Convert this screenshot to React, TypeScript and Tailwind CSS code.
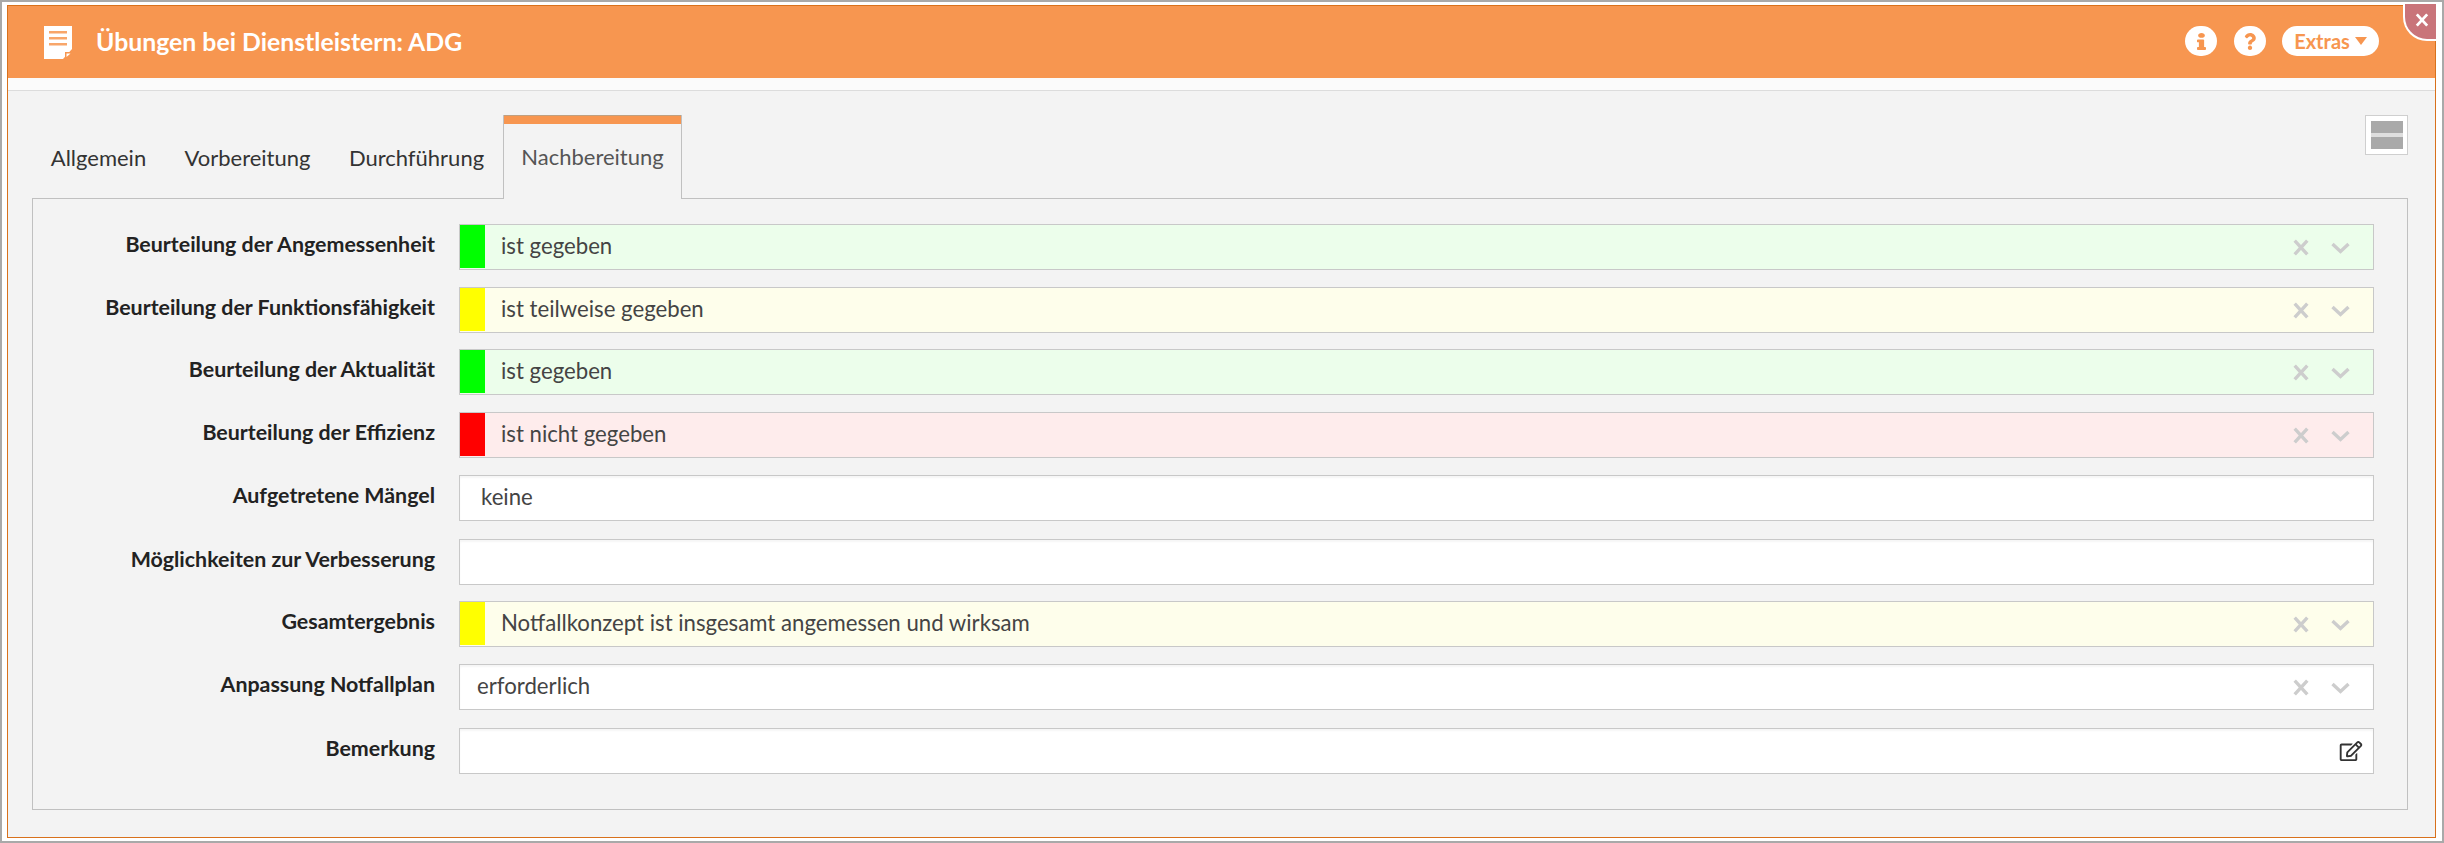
import { FaInfo, FaQuestion, FaRegEdit } from 'react-icons/fa';

type Row = {
  label: string;
  value?: string;
  color?: 'green' | 'yellow' | 'red';
  kind: 'select' | 'input' | 'text';
  rowClass: string;
  textClass?: string;
};

const rows: Row[] = [
  { label: 'Beurteilung der Angemessenheit', value: 'ist gegeben', color: 'green', kind: 'select', rowClass: 'mb-[17px]' },
  { label: 'Beurteilung der Funktionsfähigkeit', value: 'ist teilweise gegeben', color: 'yellow', kind: 'select', rowClass: 'mb-[16px]' },
  { label: 'Beurteilung der Aktualität', value: 'ist gegeben', color: 'green', kind: 'select', rowClass: 'mb-[17px]' },
  { label: 'Beurteilung der Effizienz', value: 'ist nicht gegeben', color: 'red', kind: 'select', rowClass: 'mb-[17px]' },
  { label: 'Aufgetretene Mängel', value: 'keine', kind: 'input', rowClass: 'mb-[18px]', textClass: 'pl-[21px]' },
  { label: 'Möglichkeiten zur Verbesserung', kind: 'input', rowClass: 'mb-[16px]' },
  { label: 'Gesamtergebnis', value: 'Notfallkonzept ist insgesamt angemessen und wirksam', color: 'yellow', kind: 'select', rowClass: 'mb-[17px]' },
  { label: 'Anpassung Notfallplan', value: 'erforderlich', kind: 'select', rowClass: 'mb-[18px]', textClass: 'pl-[17px]' },
  { label: 'Bemerkung', kind: 'text', rowClass: '' },
];

const fieldBg = {
  green: 'bg-[#ecfeeb]',
  yellow: 'bg-[#fefeeb]',
  red: 'bg-[#feecec]',
};

const blockBg = {
  green: 'bg-[#00ff00]',
  yellow: 'bg-[#ffff00]',
  red: 'bg-[#ff0000]',
};

const tabs = [
  { name: 'Allgemein', width: 'w-[133px]' },
  { name: 'Vorbereitung', width: 'w-[165px]' },
  { name: 'Durchführung', width: 'w-[173px]' },
];

function NoteIcon() {
  return (
    <svg viewBox="0 0 28 33" className="w-[28px] h-[33px]">
      <path d="M0 0H28V23L19 33H0Z" fill="#fff" />
      <path d="M5 5H23V7.5H5ZM5 11H23V13.5H5ZM5 17H23V19.5H5Z" fill="#f79650" opacity="0.85" />
      <path d="M21 33L21 26H28Z" fill="#f79650" />
      <path d="M22.5 31L22.5 27.5H26.5Z" fill="#fff" />
    </svg>
  );
}

function ClearIcon({ className }: { className: string }) {
  return (
    <svg viewBox="0 0 16 17" className={className}>
      <path d="M1.7 1.7L14.3 15.3M14.3 1.7L1.7 15.3" stroke="currentColor" strokeWidth="3.4" fill="none" />
    </svg>
  );
}

function ChevronIcon() {
  return (
    <svg viewBox="0 0 19 12" className="w-[19px] h-[12px] mt-[2px]">
      <path d="M1.5 2L9.5 9.5L17.5 2" stroke="currentColor" strokeWidth="3.4" fill="none" />
    </svg>
  );
}

function Field({ row }: { row: Row }) {
  const bg = row.color ? fieldBg[row.color] : 'bg-white shadow-[inset_0_2px_2px_rgba(0,0,0,0.04)]';
  return (
    <div className={`flex items-center gap-[24px] ${row.rowClass}`}>
      <label className="w-[399px] shrink-0 text-right font-bold text-[21.4px] leading-none text-[#222] -mt-[5px]">
        {row.label}
      </label>
      <div className={`flex-1 h-[46px] border border-[#c8c8c8] flex items-stretch ${bg}`}>
        {row.color && <div className={`w-[25px] mb-px shrink-0 ${blockBg[row.color]}`} />}
        <div className={`flex-1 flex items-center pb-[2px] text-[22.2px] text-[#444] ${row.color ? 'pl-[16px]' : row.textClass ?? ''}`}>
          {row.value}
        </div>
        {row.kind === 'select' && (
          <div className="flex items-center text-[#cdcdcd] pr-[23px]">
            <ClearIcon className="w-[16px] h-[17px] mr-[22px]" />
            <ChevronIcon />
          </div>
        )}
        {row.kind === 'text' && (
          <div className="flex items-center pr-[10px] text-[#333]">
            <FaRegEdit className="w-[24px] h-[20px]" />
          </div>
        )}
      </div>
    </div>
  );
}

export default function App() {
  return (
    <div className="w-[2444px] h-[843px] border-2 border-[#a9a9a9] bg-white pt-[3px] pl-[5px] pr-[6px] pb-[3px] font-['Lato','Noto_Sans',sans-serif]">
      <div className="relative h-full border border-[#d8711c] flex flex-col">
        <header className="h-[72px] shrink-0 bg-[#f79650] flex items-center pl-[36px] pr-[56px]">
          <NoteIcon />
          <h1 className="ml-[24px] text-[24.8px] font-bold text-white -mt-[1px]">Übungen bei Dienstleistern: ADG</h1>
          <div className="ml-auto flex items-center text-[#f79650] -mt-[2px]">
            <button className="w-[32px] h-[30px] rounded-full bg-white flex items-center justify-center">
              <FaInfo className="w-[9px] h-[17px]" preserveAspectRatio="none" />
            </button>
            <button className="ml-[17px] w-[32px] h-[30px] rounded-full bg-white flex items-center justify-center">
              <FaQuestion className="w-[12px] h-[17px]" preserveAspectRatio="none" />
            </button>
            <button className="ml-[16px] w-[97px] h-[30px] rounded-full bg-white flex items-center justify-center font-bold text-[20px]">
              Extras
              <svg viewBox="0 0 12 8" className="ml-[5px] w-[12px] h-[8px]">
                <path d="M0 0H12L6 8Z" fill="currentColor" />
              </svg>
            </button>
          </div>
        </header>

        <div className="h-[13px] shrink-0 bg-[#fbfbfb] border-b border-[#dcdcdc]" />

        <main className="flex-1 bg-[#f3f3f3] pt-[24px] pl-[24px] pr-[27px]">
          <div className="flex justify-between">
            <div className="flex h-[84px] relative z-10">
              {tabs.map((tab) => (
                <div key={tab.name} className={`${tab.width} flex items-center justify-center pt-[1px] text-[22px] text-[#333]`}>
                  {tab.name}
                </div>
              ))}
              <div className="w-[179px] border-x border-[#c0c0c0] bg-[#f3f3f3] flex flex-col">
                <div className="h-[9px] bg-[#f79650] border-t border-[#c0a080]" />
                <div className="flex-1 flex items-center justify-center pb-[11px] text-[22px] text-[#555]">Nachbereitung</div>
              </div>
            </div>
            <div className="w-[43px] h-[40px] border border-[#cfcfcf] bg-white flex flex-col justify-center items-center">
              <div className="w-[32px] h-[12px] bg-[#a9a9a9]" />
              <div className="w-[32px] h-[4px] bg-[#dedede]" />
              <div className="w-[32px] h-[12px] bg-[#a9a9a9]" />
            </div>
          </div>
          <div className="-mt-px border border-[#c0c0c0] h-[612px] pt-[25px] pl-[3px] pr-[33px]">
            {rows.map((row) => (
              <Field key={row.label} row={row} />
            ))}
          </div>
        </main>

        <div className="absolute -top-[2px] -right-[1px] w-[33px] h-[37px] bg-[#c9747a] border-l-2 border-b-2 border-white rounded-bl-[24px] flex items-center justify-center pl-[3px] pb-[3px] text-white">
          <ClearIcon className="w-[14px] h-[14px]" />
        </div>
      </div>
    </div>
  );
}
